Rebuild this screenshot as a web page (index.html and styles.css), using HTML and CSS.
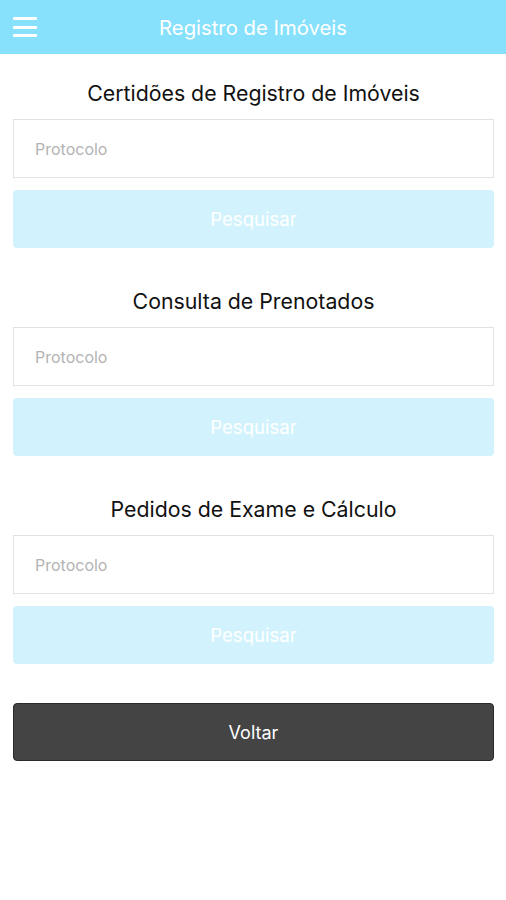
FILE: index.html
```html
<!DOCTYPE html>
<html lang="pt">
<head>
<meta charset="UTF-8">
<meta name="viewport" content="width=device-width, initial-scale=1.0">
<title>Registro de Imóveis</title>
<link rel="stylesheet" href="styles.css">
</head>
<body>

<header class="topbar">
  <button class="menu-btn" aria-label="Menu">
    <span></span><span></span><span></span>
  </button>
  <h1>Registro de Imóveis</h1>
</header>

<main class="content">
  <section class="search-block">
    <h2>Certidões de Registro de Imóveis</h2>
    <input type="text" class="field" placeholder="Protocolo">
    <button class="btn-search">Pesquisar</button>
  </section>

  <section class="search-block">
    <h2>Consulta de Prenotados</h2>
    <input type="text" class="field" placeholder="Protocolo">
    <button class="btn-search">Pesquisar</button>
  </section>

  <section class="search-block">
    <h2>Pedidos de Exame e Cálculo</h2>
    <input type="text" class="field" placeholder="Protocolo">
    <button class="btn-search">Pesquisar</button>
  </section>

  <button class="btn-back">Voltar</button>
</main>

</body>
</html>
```

FILE: styles.css
```css
body {
  font-family: Inter, "Noto Sans", "Liberation Sans", sans-serif;
  margin: 0;
  padding: 0;
  background: #fff;
  color: #111;
}
.topbar {
  height: 54px;
  background-color: #87e1fc;
  display: flex;
  align-items: center;
  justify-content: center;
  position: relative;
}
.topbar h1 {
  margin: 0;
  font-size: 20.3px;
  font-weight: 400;
  color: #fff;
}
.menu-btn {
  position: absolute;
  left: 13px;
  top: 17px;
  width: 24px;
  height: 20px;
  padding: 0;
  border: none;
  background: none;
  display: flex;
  flex-direction: column;
  justify-content: space-between;
}
.menu-btn span {
  display: block;
  height: 3px;
  background: #fff;
  border-radius: 1px;
}
.content {
  padding: 0 12px 0 13px;
}
.search-block {
  display: flex;
  flex-direction: column;
  padding-top: 28px;
  margin-bottom: 14px;
}
.search-block h2 {
  margin: 0 0 13px;
  height: 24px;
  line-height: 23px;
  font-size: 21.3px;
  font-weight: 400;
  text-align: center;
  color: #111;
}
.field {
  height: 59px;
  box-sizing: border-box;
  border: 1px solid #e2e2e2;
  padding: 0 21px;
  font-family: inherit;
  font-size: 16px;
  color: #333;
  margin: 0 0 12px;
}
.field::placeholder {
  color: #b3b3b3;
}
.btn-search {
  height: 58px;
  border: none;
  border-radius: 4px;
  background-color: #d2f3fd;
  color: #fff;
  font-family: inherit;
  font-size: 18.6px;
}
.btn-back {
  display: block;
  width: 100%;
  height: 58px;
  margin-top: 39px;
  border: 1px solid #2a2a2a;
  border-radius: 4px;
  background-color: #444;
  color: #fff;
  font-family: inherit;
  font-size: 18px;
}
```
